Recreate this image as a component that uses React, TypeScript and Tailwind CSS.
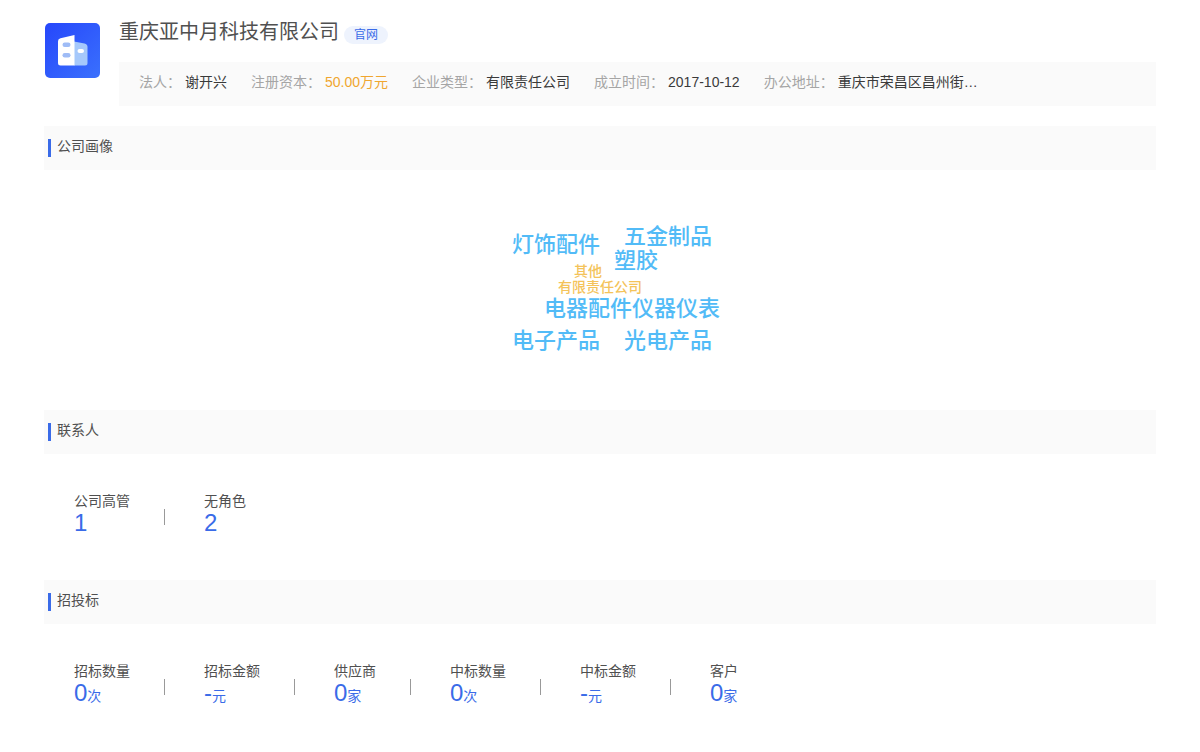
import React from 'react';

type Info = { label: string; value: string; highlight?: boolean };
type Stat = { label: string; value: string; unit?: string };

const infos: Info[] = [
  { label: '法人：', value: '谢开兴' },
  { label: '注册资本：', value: '50.00万元', highlight: true },
  { label: '企业类型：', value: '有限责任公司' },
  { label: '成立时间：', value: '2017-10-12' },
  { label: '办公地址：', value: '重庆市荣昌区昌州街…' },
];

// Word positions on the cloud canvas
const words = [
  { text: '灯饰配件', place: 'left-8 top-16' },
  { text: '五金制品', place: 'left-36 top-14' },
  { text: '塑胶', place: 'left-[134px] top-20' },
  { text: '其他', place: 'left-[94px] top-[93px]', small: true },
  { text: '有限责任公司', place: 'left-[78px] top-[109px]', small: true },
  { text: '电器配件仪器仪表', place: 'left-16 top-32' },
  { text: '电子产品', place: 'left-8 top-40' },
  { text: '光电产品', place: 'left-36 top-40' },
];

const contacts: Stat[] = [
  { label: '公司高管', value: '1' },
  { label: '无角色', value: '2' },
];

const bids: Stat[] = [
  { label: '招标数量', value: '0', unit: '次' },
  { label: '招标金额', value: '-', unit: '元' },
  { label: '供应商', value: '0', unit: '家' },
  { label: '中标数量', value: '0', unit: '次' },
  { label: '中标金额', value: '-', unit: '元' },
  { label: '客户', value: '0', unit: '家' },
];

const CompanyLogo: React.FC = () => (
  <svg viewBox="0 0 55 55" className="size-[55px] shrink-0" role="img" aria-label="公司">
    <defs>
      <linearGradient id="logo-bg" x1="0" y1="0" x2="1" y2="1">
        <stop offset="0" stopColor="#2647fb" />
        <stop offset="1" stopColor="#3a70fd" />
      </linearGradient>
    </defs>
    <rect width="55" height="55" rx="5" fill="url(#logo-bg)" />
    <path d="M29 18.500L39.500 20.500Q42.500 21.200 42.500 24V40Q42.500 42.500 40 42.500H29Z" fill="#a5c8fb" />
    <path d="M15.500 15.200L29.500 12V42.500H15.500Q13 42.500 13 40V18.200Q13 15.800 15.500 15.200Z" fill="#fff" />
    <rect x="17.500" y="19.500" width="8" height="4.500" rx="2.200" fill="#9fbcf6" />
    <rect x="17.500" y="30" width="8" height="4.500" rx="2.200" fill="#9fbcf6" />
    <rect x="32.500" y="26" width="6.500" height="4" rx="2" fill="#fff" />
  </svg>
);

const SectionTitle: React.FC<{ children: React.ReactNode }> = ({ children }) => (
  <div className="flex h-11 items-center bg-[#fafafa] px-1">
    <span className="mr-1.5 h-[18px] w-[3px] bg-[#3a6be8]" />
    <h2 className="pb-1 text-sm">{children}</h2>
  </div>
);

const StatList: React.FC<{ items: Stat[] }> = ({ items }) => (
  <dl className="flex px-[30px] pt-9 pb-11">
    {items.map((item, index) => (
      <div key={item.label} className="flex items-start">
        {index > 0 && <span className="mt-[19px] mr-[39px] ml-[34px] h-4 w-px bg-[#999]" />}
        <div>
          <dt className="text-sm leading-[22px]">{item.label}</dt>
          <dd className="h-6 text-2xl leading-[22px] text-[#3a6be8]">
            {item.value}
            {item.unit && <span className="text-sm leading-[22px]">{item.unit}</span>}
          </dd>
        </div>
      </div>
    ))}
  </dl>
);

const App: React.FC = () => {
  return (
    <main className="bg-white px-11 pt-[18px] font-['Liberation_Sans','Noto_Sans_CJK_SC',sans-serif] text-[#505050]">
      <header className="mb-5 flex gap-[19px] pl-px">
        <div className="pt-[5px]">
          <CompanyLogo />
        </div>
        <div className="min-w-0 flex-1">
          <div className="flex h-11 items-start gap-[5px]">
            <h1 className="text-xl leading-7">重庆亚中月科技有限公司</h1>
            <a
              href="#"
              className="mt-2 rounded-full bg-[#eef3fd] px-2.5 text-xs leading-[18px] text-[#3a6be8]"
            >
              官网
            </a>
          </div>
          <dl className="flex min-h-11 flex-wrap items-center gap-x-6 bg-[#fafafa] px-5 pb-1 text-sm">
            {infos.map((info) => (
              <div key={info.label} className="flex gap-1 whitespace-nowrap">
                <dt className="text-[#a5a5a5]">{info.label}</dt>
                <dd className={info.highlight ? 'text-[#f0a62f]' : 'text-[#3a3a3a]'}>
                  {info.value}
                </dd>
              </div>
            ))}
          </dl>
        </div>
      </header>

      <section>
        <SectionTitle>公司画像</SectionTitle>
        <div className="relative mx-auto h-60 w-60 font-medium">
          {words.map((word) => (
            <span
              key={word.text}
              className={`absolute whitespace-nowrap ${word.place} ${
                word.small
                  ? 'text-sm leading-4 text-[#f4c35a]'
                  : 'text-[22px] leading-[22px] text-[#52bbf7]'
              }`}
            >
              {word.text}
            </span>
          ))}
        </div>
      </section>

      <section>
        <SectionTitle>联系人</SectionTitle>
        <StatList items={contacts} />
      </section>

      <section>
        <SectionTitle>招投标</SectionTitle>
        <StatList items={bids} />
      </section>
    </main>
  );
};

export default App;
